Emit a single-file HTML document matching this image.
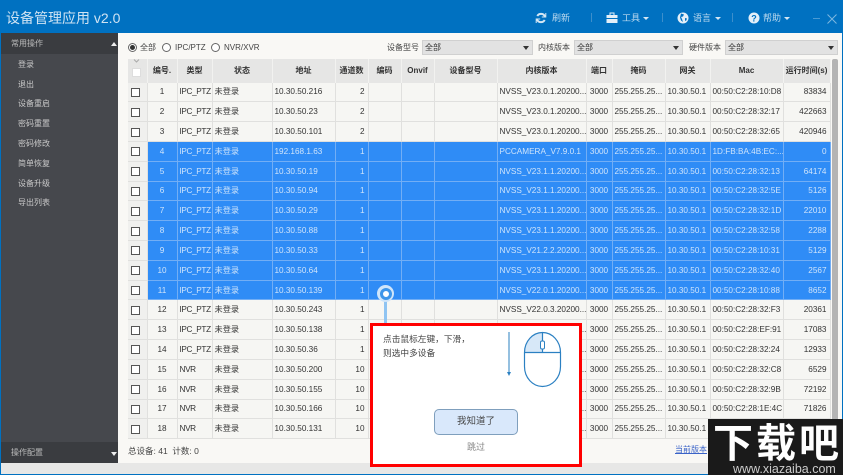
<!DOCTYPE html>
<html><head><meta charset="utf-8"><style>
html,body{margin:0;padding:0;background:#f9f8f5}
body{width:843px;height:475px;overflow:hidden;position:relative;background:#f9f8f5;font-family:"Liberation Sans","Noto Sans CJK SC",sans-serif;font-size:8px;color:#333;filter:blur(.35px)}
.a{position:absolute}
#top{left:0;top:0;width:843px;height:33px;background:#0071c1}
#title{left:6px;top:9px;font-size:14px;line-height:18px;color:#cfe3f3;white-space:nowrap}
.tb{top:12px;color:#bcd9ee;font-size:9px;line-height:13px;white-space:nowrap}
.sep{top:13px;width:1px;height:9px;background:#3d8fcb}
#side{left:1px;top:33px;width:117px;height:430px;background:#46484d}
#sh{left:1px;top:33px;width:117px;height:21px;background:#3a3c40;color:#bbb}
.mi{left:18px;color:#c9c9c9;font-size:8px;line-height:12px;white-space:nowrap}
#sf{left:1px;top:442px;width:117px;height:21px;background:#3a3c40;color:#bbb}
.rb{top:43px;width:7px;height:7px;border:1px solid #666;border-radius:50%;background:#fff}
.lb{top:42px;line-height:12px;white-space:nowrap;color:#444;font-size:8px}
.sel{top:40px;height:15px;background:#e2e2e2;border:1px solid #d0d0d0;box-sizing:border-box;line-height:13px;padding-left:2px;color:#333;font-size:8px}
.sel i{position:absolute;right:3px;top:5px;border:3px solid transparent;border-top:4px solid #333;border-bottom:0}
table{position:absolute;left:128px;top:59px;border-collapse:collapse;table-layout:fixed;width:702px}
th{height:22.5px;background:#e6e6e5;font-size:8px;font-weight:bold;color:#333;padding:0;border-right:1px solid #f2f2f0;overflow:hidden;white-space:nowrap}
td{height:17.82px;padding:1px 0 0 2px;border-right:1px solid #e0e0de;border-bottom:1px solid #e0e0de;background:#f6f6f3;overflow:hidden;white-space:nowrap;font-size:8.2px;color:#333;line-height:12px}
td:nth-child(3){letter-spacing:-.35px}
td.c,th.c{text-align:center;padding:1px 0 0}
td.r{text-align:right;padding-right:3px}
td.k{background:#f0f0ee}
td.k b{display:block;width:7px;height:7px;border:1px solid #555;background:#fff;margin:0 0 0 1px}
tr.s td{background:#2f8cf6;color:#cfe4fb;border-color:#72aef5}
tr.s td.k{background:#f0f0ee;border-color:#e0e0de}
#mask{left:128px;top:440px;width:704px;height:23px;background:#f9f8f5}
#bot{left:0;top:463px;width:843px;height:11px;background:#e7e7e6}
#bb{left:0;top:474px;width:843px;height:1px;background:#0071c1}
#lb{left:0;top:33px;width:1px;height:442px;background:#0071c1}
#rl{left:842px;top:33px;width:1px;height:442px;background:#0071c1}
#sb{left:832px;top:59px;width:6px;height:381px;background:#b4b4b4;border-radius:2px}
#pop{left:370px;top:323px;width:212px;height:144px;box-sizing:border-box;border:3px solid #f00;background:#fff}
#wm{left:708px;top:419px;width:135px;height:56px;background:#1a1a1a;color:#fff;overflow:hidden}
</style></head><body>
<div class="a" id="top"></div>
<div class="a" id="title">设备管理应用 v2.0</div>
<svg class="a" style="left:535px;top:12px" width="12" height="12" viewBox="0 0 12 12" fill="none" stroke="#d5e7f4" stroke-width="2"><path d="M10 4.500A4.300 4.300 0 0 0 2.300 4M2 7.500A4.300 4.300 0 0 0 9.700 8"/><path d="M10.800 1v4h-4M1.200 11V7h4" stroke-width="1"/></svg>
<div class="a tb" style="left:552px">刷新</div>
<div class="a sep" style="left:591px"></div>
<svg class="a" style="left:606px;top:12px" width="12" height="12" viewBox="0 0 12 12"><rect x="0.500" y="3" width="11" height="8" fill="#e4eff8"/><rect x="4" y="1" width="4" height="2.500" fill="none" stroke="#e4eff8"/><rect x="0.500" y="6" width="11" height="1" fill="#0071c1"/></svg>
<div class="a tb" style="left:622px">工具</div>
<div class="a" style="left:643px;top:17px;border:3px solid transparent;border-top:3px solid #d5e7f4;border-bottom:0"></div>
<div class="a sep" style="left:662px"></div>
<svg class="a" style="left:677px;top:12px" width="12" height="12" viewBox="0 0 12 12"><circle cx="6" cy="6" r="5.500" fill="#e4eff8"/><path d="M4 1.500l3 1-1 2-2 .5 1 2 1 3-2-1.500-1-3zM8 6l2 .5-1 2.500-1-.5z" fill="#0071c1"/></svg>
<div class="a tb" style="left:693px">语言</div>
<div class="a" style="left:715px;top:17px;border:3px solid transparent;border-top:3px solid #d5e7f4;border-bottom:0"></div>
<div class="a sep" style="left:732px"></div>
<svg class="a" style="left:748px;top:12px" width="12" height="12" viewBox="0 0 12 12"><circle cx="6" cy="6" r="5.500" fill="#e4eff8"/><text x="6" y="9.500" text-anchor="middle" font-size="9" font-weight="bold" fill="#0071c1" font-family="Liberation Sans">?</text></svg>
<div class="a tb" style="left:763px">帮助</div>
<div class="a" style="left:784px;top:17px;border:3px solid transparent;border-top:3px solid #d5e7f4;border-bottom:0"></div>
<div class="a" style="left:813px;top:18px;width:7px;height:1px;background:#4a9ad4"></div>
<svg class="a" style="left:827px;top:14px" width="10" height="10" viewBox="0 0 10 10" stroke="#7db7e0" fill="none"><path d="M.5 .5l9 9M9.500 .5l-9 9"/></svg>

<div class="a" id="side"></div>
<div class="a" id="sh"><span class="a" style="left:10px;top:5px;font-size:8px;line-height:12px;white-space:nowrap">常用操作</span><span class="a" style="left:110px;top:9px;border:3px solid transparent;border-bottom:4px solid #eee;border-top:0"></span></div>
<div class="a mi" style="top:59px">登录</div>
<div class="a mi" style="top:79px">退出</div>
<div class="a mi" style="top:98px">设备重启</div>
<div class="a mi" style="top:118px">密码重置</div>
<div class="a mi" style="top:138px">密码修改</div>
<div class="a mi" style="top:158px">简单恢复</div>
<div class="a mi" style="top:178px">设备升级</div>
<div class="a mi" style="top:197px">导出列表</div>
<div class="a" id="sf"><span class="a" style="left:10px;top:5px;font-size:8px;line-height:12px;white-space:nowrap">操作配置</span><span class="a" style="left:110px;top:10px;border:3px solid transparent;border-top:4px solid #eee;border-bottom:0"></span></div>

<div class="a rb" style="left:128px"></div><div class="a" style="left:130px;top:45px;width:5px;height:5px;border-radius:50%;background:#333"></div>
<div class="a lb" style="left:140px">全部</div>
<div class="a rb" style="left:162px"></div><div class="a lb" style="left:175px">IPC/PTZ</div>
<div class="a rb" style="left:211px"></div><div class="a lb" style="left:224px">NVR/XVR</div>
<div class="a lb" style="left:387px">设备型号</div>
<div class="a sel" style="left:422px;width:111px">全部<i></i></div>
<div class="a lb" style="left:538px">内核版本</div>
<div class="a sel" style="left:574px;width:109px">全部<i></i></div>
<div class="a lb" style="left:689px">硬件版本</div>
<div class="a sel" style="left:725px;width:113px">全部<i></i></div>

<table><colgroup><col style="width:19px"><col style="width:30px"><col style="width:35px"><col style="width:60px"><col style="width:63px"><col style="width:33px"><col style="width:33px"><col style="width:33px"><col style="width:63px"><col style="width:89px"><col style="width:26px"><col style="width:53px"><col style="width:45px"><col style="width:73px"><col style="width:47px"></colgroup>
<tr><th class="c"><b style="display:block;width:7px;height:7px;background:#fff;margin:2px 0 0 4px;border:1px solid #ddd"></b></th><th>编号.</th><th>类型</th><th>状态</th><th>地址</th><th>通道数</th><th>编码</th><th>Onvif</th><th>设备型号</th><th>内核版本</th><th>端口</th><th>掩码</th><th>网关</th><th>Mac</th><th>运行时间(s)</th></tr>
<tr><td class="k"><b></b></td><td class="c">1</td><td>IPC_PTZ</td><td>未登录</td><td>10.30.50.216</td><td class="r">2</td><td></td><td></td><td></td><td>NVSS_V23.0.1.20200...</td><td class="c">3000</td><td>255.255.25...</td><td>10.30.50.1</td><td>00:50:C2:28:10:D8</td><td class="r">83834</td></tr>
<tr><td class="k"><b></b></td><td class="c">2</td><td>IPC_PTZ</td><td>未登录</td><td>10.30.50.23</td><td class="r">2</td><td></td><td></td><td></td><td>NVSS_V23.0.1.20200...</td><td class="c">3000</td><td>255.255.25...</td><td>10.30.50.1</td><td>00:50:C2:28:32:17</td><td class="r">422663</td></tr>
<tr><td class="k"><b></b></td><td class="c">3</td><td>IPC_PTZ</td><td>未登录</td><td>10.30.50.101</td><td class="r">2</td><td></td><td></td><td></td><td>NVSS_V23.0.1.20200...</td><td class="c">3000</td><td>255.255.25...</td><td>10.30.50.1</td><td>00:50:C2:28:32:65</td><td class="r">420946</td></tr>
<tr class="s"><td class="k"><b></b></td><td class="c">4</td><td>IPC_PTZ</td><td>未登录</td><td>192.168.1.63</td><td class="r">1</td><td></td><td></td><td></td><td>PCCAMERA_V7.9.0.1</td><td class="c">3000</td><td>255.255.25...</td><td>10.30.50.1</td><td>1D:FB:BA:4B:EC:...</td><td class="r">0</td></tr>
<tr class="s"><td class="k"><b></b></td><td class="c">5</td><td>IPC_PTZ</td><td>未登录</td><td>10.30.50.19</td><td class="r">1</td><td></td><td></td><td></td><td>NVSS_V23.1.1.20200...</td><td class="c">3000</td><td>255.255.25...</td><td>10.30.50.1</td><td>00:50:C2:28:32:13</td><td class="r">64174</td></tr>
<tr class="s"><td class="k"><b></b></td><td class="c">6</td><td>IPC_PTZ</td><td>未登录</td><td>10.30.50.94</td><td class="r">1</td><td></td><td></td><td></td><td>NVSS_V23.1.1.20200...</td><td class="c">3000</td><td>255.255.25...</td><td>10.30.50.1</td><td>00:50:C2:28:32:5E</td><td class="r">5126</td></tr>
<tr class="s"><td class="k"><b></b></td><td class="c">7</td><td>IPC_PTZ</td><td>未登录</td><td>10.30.50.29</td><td class="r">1</td><td></td><td></td><td></td><td>NVSS_V23.1.1.20200...</td><td class="c">3000</td><td>255.255.25...</td><td>10.30.50.1</td><td>00:50:C2:28:32:1D</td><td class="r">22010</td></tr>
<tr class="s"><td class="k"><b></b></td><td class="c">8</td><td>IPC_PTZ</td><td>未登录</td><td>10.30.50.88</td><td class="r">1</td><td></td><td></td><td></td><td>NVSS_V23.1.1.20200...</td><td class="c">3000</td><td>255.255.25...</td><td>10.30.50.1</td><td>00:50:C2:28:32:58</td><td class="r">2288</td></tr>
<tr class="s"><td class="k"><b></b></td><td class="c">9</td><td>IPC_PTZ</td><td>未登录</td><td>10.30.50.33</td><td class="r">1</td><td></td><td></td><td></td><td>NVSS_V21.2.2.20200...</td><td class="c">3000</td><td>255.255.25...</td><td>10.30.50.1</td><td>00:50:C2:28:10:31</td><td class="r">5129</td></tr>
<tr class="s"><td class="k"><b></b></td><td class="c">10</td><td>IPC_PTZ</td><td>未登录</td><td>10.30.50.64</td><td class="r">1</td><td></td><td></td><td></td><td>NVSS_V23.1.1.20200...</td><td class="c">3000</td><td>255.255.25...</td><td>10.30.50.1</td><td>00:50:C2:28:32:40</td><td class="r">2567</td></tr>
<tr class="s"><td class="k"><b></b></td><td class="c">11</td><td>IPC_PTZ</td><td>未登录</td><td>10.30.50.139</td><td class="r">1</td><td></td><td></td><td></td><td>NVSS_V22.0.1.20200...</td><td class="c">3000</td><td>255.255.25...</td><td>10.30.50.1</td><td>00:50:C2:28:10:88</td><td class="r">8652</td></tr>
<tr><td class="k"><b></b></td><td class="c">12</td><td>IPC_PTZ</td><td>未登录</td><td>10.30.50.243</td><td class="r">1</td><td></td><td></td><td></td><td>NVSS_V22.0.3.20200...</td><td class="c">3000</td><td>255.255.25...</td><td>10.30.50.1</td><td>00:50:C2:28:32:F3</td><td class="r">20361</td></tr>
<tr><td class="k"><b></b></td><td class="c">13</td><td>IPC_PTZ</td><td>未登录</td><td>10.30.50.138</td><td class="r">1</td><td></td><td></td><td></td><td>NVSS_V22.0.3.20200...</td><td class="c">3000</td><td>255.255.25...</td><td>10.30.50.1</td><td>00:50:C2:28:EF:91</td><td class="r">17083</td></tr>
<tr><td class="k"><b></b></td><td class="c">14</td><td>IPC_PTZ</td><td>未登录</td><td>10.30.50.36</td><td class="r">1</td><td></td><td></td><td></td><td>NVSS_V22.0.3.20200...</td><td class="c">3000</td><td>255.255.25...</td><td>10.30.50.1</td><td>00:50:C2:28:32:24</td><td class="r">12933</td></tr>
<tr><td class="k"><b></b></td><td class="c">15</td><td>NVR</td><td>未登录</td><td>10.30.50.200</td><td class="r">10</td><td></td><td></td><td></td><td>NVSS_V22.0.3.20200...</td><td class="c">3000</td><td>255.255.25...</td><td>10.30.50.1</td><td>00:50:C2:28:32:C8</td><td class="r">6529</td></tr>
<tr><td class="k"><b></b></td><td class="c">16</td><td>NVR</td><td>未登录</td><td>10.30.50.155</td><td class="r">10</td><td></td><td></td><td></td><td>NVSS_V22.0.3.20200...</td><td class="c">3000</td><td>255.255.25...</td><td>10.30.50.1</td><td>00:50:C2:28:32:9B</td><td class="r">72192</td></tr>
<tr><td class="k"><b></b></td><td class="c">17</td><td>NVR</td><td>未登录</td><td>10.30.50.166</td><td class="r">10</td><td></td><td></td><td></td><td>NVSS_V22.0.3.20200...</td><td class="c">3000</td><td>255.255.25...</td><td>10.30.50.1</td><td>00:50:C2:28:1E:4C</td><td class="r">71826</td></tr>
<tr><td class="k"><b></b></td><td class="c">18</td><td>NVR</td><td>未登录</td><td>10.30.50.131</td><td class="r">10</td><td></td><td></td><td></td><td>NVSS_V22.0.3.20200...</td><td class="c">3000</td><td>255.255.25...</td><td>10.30.50.1</td><td></td><td></td></tr>
</table>
<svg class="a" style="left:133px;top:59px" width="7" height="4" viewBox="0 0 7 4" fill="none" stroke="#aaa"><path d="M1 .5l2.500 2.500L6 .5"/></svg>
<div class="a" id="sb"></div>
<div class="a" id="mask"></div>
<div class="a" style="left:128px;top:445px;line-height:12px;color:#444;white-space:nowrap;font-size:8.500px">总设备: 41&nbsp; 计数: 0</div>
<div class="a" style="left:675px;top:444px;line-height:12px;color:#3a63c8;text-decoration:underline;white-space:nowrap">当前版本</div>
<div class="a" id="bot"></div><div class="a" id="bb"></div><div class="a" id="lb"></div><div class="a" id="rl"></div>

<div class="a" style="left:384px;top:300px;width:3px;height:24px;background:#8fc4f2"></div>
<div class="a" style="left:377px;top:285px;width:17px;height:17px;border-radius:50%;background:#cfe5fa"></div>
<div class="a" style="left:379.500px;top:287.500px;width:12px;height:12px;box-sizing:border-box;border-radius:50%;border:3px solid #3d96ea;background:#fff"></div>

<div class="a" id="pop">
<div class="a" style="left:10px;top:6px;font-size:8.700px;line-height:14px;color:#444;white-space:nowrap">点击鼠标左键，下滑，<br>则选中多设备</div>
<svg class="a" style="left:126px;top:5px" width="70" height="62" viewBox="0 0 70 62" fill="none"><path d="M10 1V43" stroke="#2b80c2"/><path d="M8 41h4l-2 4z" fill="#2b80c2"/><path d="M43.500 1.500a18 18 0 0 0-18 18v2h18z" fill="#d7e8f8"/><rect x="25.500" y="1.500" width="36" height="54" rx="18" ry="20" stroke="#2b80c2" stroke-width="1.200"/><path d="M25.500 21.500H61.500M43.500 1.500V21.500" stroke="#2b80c2" stroke-width="1.200"/><rect x="41.500" y="10" width="4" height="8" rx="1.500" fill="#fff" stroke="#2b80c2"/></svg>
<div class="a" style="left:61px;top:83px;width:84px;height:26px;box-sizing:border-box;background:#d9e8fb;border:1px solid #7f9fbd;border-radius:5px;text-align:center;line-height:24px;font-size:9.500px;color:#444">我知道了</div>
<div class="a" style="left:0;top:115px;width:206px;text-align:center;font-size:9px;line-height:12px;color:#888">跳过</div>
</div>

<div class="a" id="wm">
<div class="a" style="left:5px;top:-2px;width:131px;font-size:40px;line-height:46px;font-weight:bold;letter-spacing:3px;white-space:nowrap;font-family:'Noto Sans CJK SC',sans-serif">下载吧</div>
<div class="a" style="left:25px;top:44px;font-size:12.500px;line-height:13px;color:#ccc;white-space:nowrap">www.xiazaiba.com</div>
</div>
</body></html>
